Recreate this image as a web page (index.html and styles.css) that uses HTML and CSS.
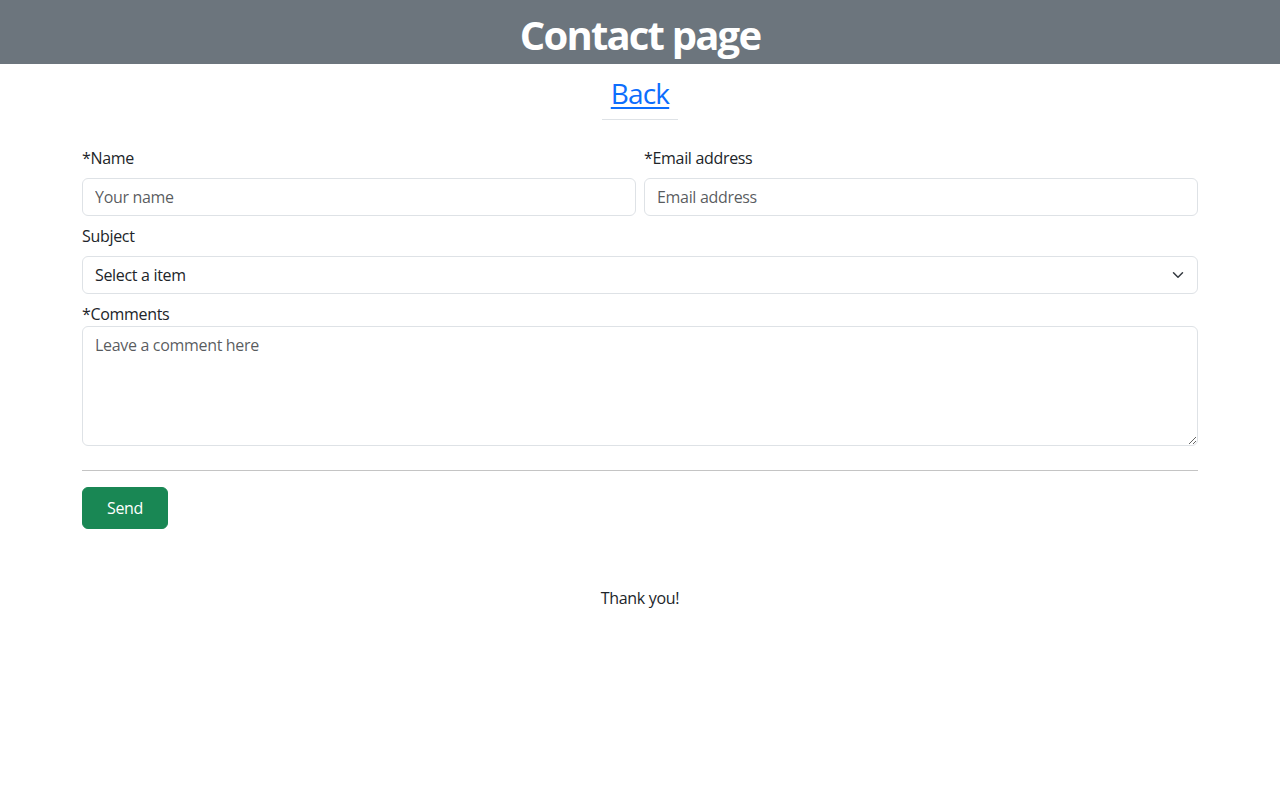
FILE: index.html
```html
<!DOCTYPE html>
<html lang="en">
<head>
<meta charset="utf-8">
<title>Contact page</title>
<link rel="stylesheet" href="styles.css">
</head>
<body>
<header class="page-header">
  <h1 class="title">Contact page</h1>
</header>
<div class="back-wrap">
  <div class="back-box"><a class="back-link" href="#">Back</a></div>
</div>
<main class="container">
  <form class="contact-form">
    <div class="row">
      <div class="col">
        <label class="form-label" for="name">*Name</label>
        <input class="form-control" id="name" type="text" placeholder="Your name">
      </div>
      <div class="col">
        <label class="form-label" for="email">*Email address</label>
        <input class="form-control" id="email" type="email" placeholder="Email address">
      </div>
    </div>
    <div class="field">
      <label class="form-label" for="subject">Subject</label>
      <div class="select-wrap">
        <select class="form-select" id="subject">
          <option>Select a item</option>
        </select>
        <svg class="chevron" viewBox="0 0 16 16" width="16" height="12" aria-hidden="true"><path fill="none" stroke="#343a40" stroke-linecap="round" stroke-linejoin="round" stroke-width="2" d="m2 5 6 6 6-6"/></svg>
      </div>
    </div>
    <div class="field">
      <label class="form-label tight" for="comments">*Comments</label>
      <textarea class="form-control area" id="comments" placeholder="Leave a comment here"></textarea>
    </div>
    <hr class="divider">
    <button class="btn-send" type="button">Send</button>
  </form>
  <p class="thanks">Thank you!</p>
</main>
</body>
</html>
```
FILE: styles.css
```css
* { box-sizing: border-box; }
html, body { margin: 0; padding: 0; }
body {
  font-family: "Open Sans", "Noto Sans", sans-serif;
  font-size: 16px;
  line-height: 1.5;
  letter-spacing: -0.02em;
  color: #212529;
  background: #fff;
}
.page-header {
  background: #6c757d;
  height: 64px;
  display: flex;
  align-items: center;
  justify-content: center;
  padding-top: 5px;
}
.title {
  margin: 0;
  color: #fff;
  font-size: 40px;
  font-weight: 700;
  line-height: 1.2;
  letter-spacing: -0.045em;
}
.back-wrap {
  display: flex;
  justify-content: center;
  padding-top: 13px;
}
.back-box {
  border-bottom: 1px solid #dee2e6;
  padding: 0 9px 8px;
}
.back-link {
  font-size: 28px;
  line-height: 1.2;
  color: #0d6efd;
  text-decoration: underline;
  text-underline-offset: 3px;
  text-decoration-thickness: 2px;
  letter-spacing: -0.03em;
}
.container {
  width: 1116px;
  margin: 0 auto;
  padding-top: 26px;
}
.row {
  display: flex;
  gap: 8px;
}
.col { flex: 1; min-width: 0; }
.field { margin-top: 8px; }
.form-label {
  display: block;
  margin-bottom: 8px;
}
.form-label.tight { margin-bottom: 0; }
.form-control, .form-select {
  display: block;
  width: 100%;
  height: 38px;
  padding: 6px 12px;
  font: inherit;
  letter-spacing: inherit;
  color: #212529;
  background: #fff;
  border: 1px solid #dee2e6;
  border-radius: 6px;
  outline: none;
}
.form-control::placeholder { color: rgba(33, 37, 41, 0.75); opacity: 1; }
.select-wrap { position: relative; }
.form-select {
  appearance: none;
  -webkit-appearance: none;
  padding-right: 36px;
}
.chevron {
  position: absolute;
  right: 12px;
  top: 13px;
  pointer-events: none;
}
.area {
  height: 120px;
  resize: vertical;
}
.divider {
  margin: 24px 0 16px;
  border: 0;
  border-top: 1px solid #c4c4c4;
}
.btn-send {
  font: inherit;
  letter-spacing: inherit;
  color: #fff;
  background: #198754;
  border: 1px solid #198754;
  border-radius: 6px;
  padding: 8px 24px;
  line-height: 1.5;
  cursor: pointer;
}
.thanks {
  text-align: center;
  margin: 57px 0 0;
}
```
